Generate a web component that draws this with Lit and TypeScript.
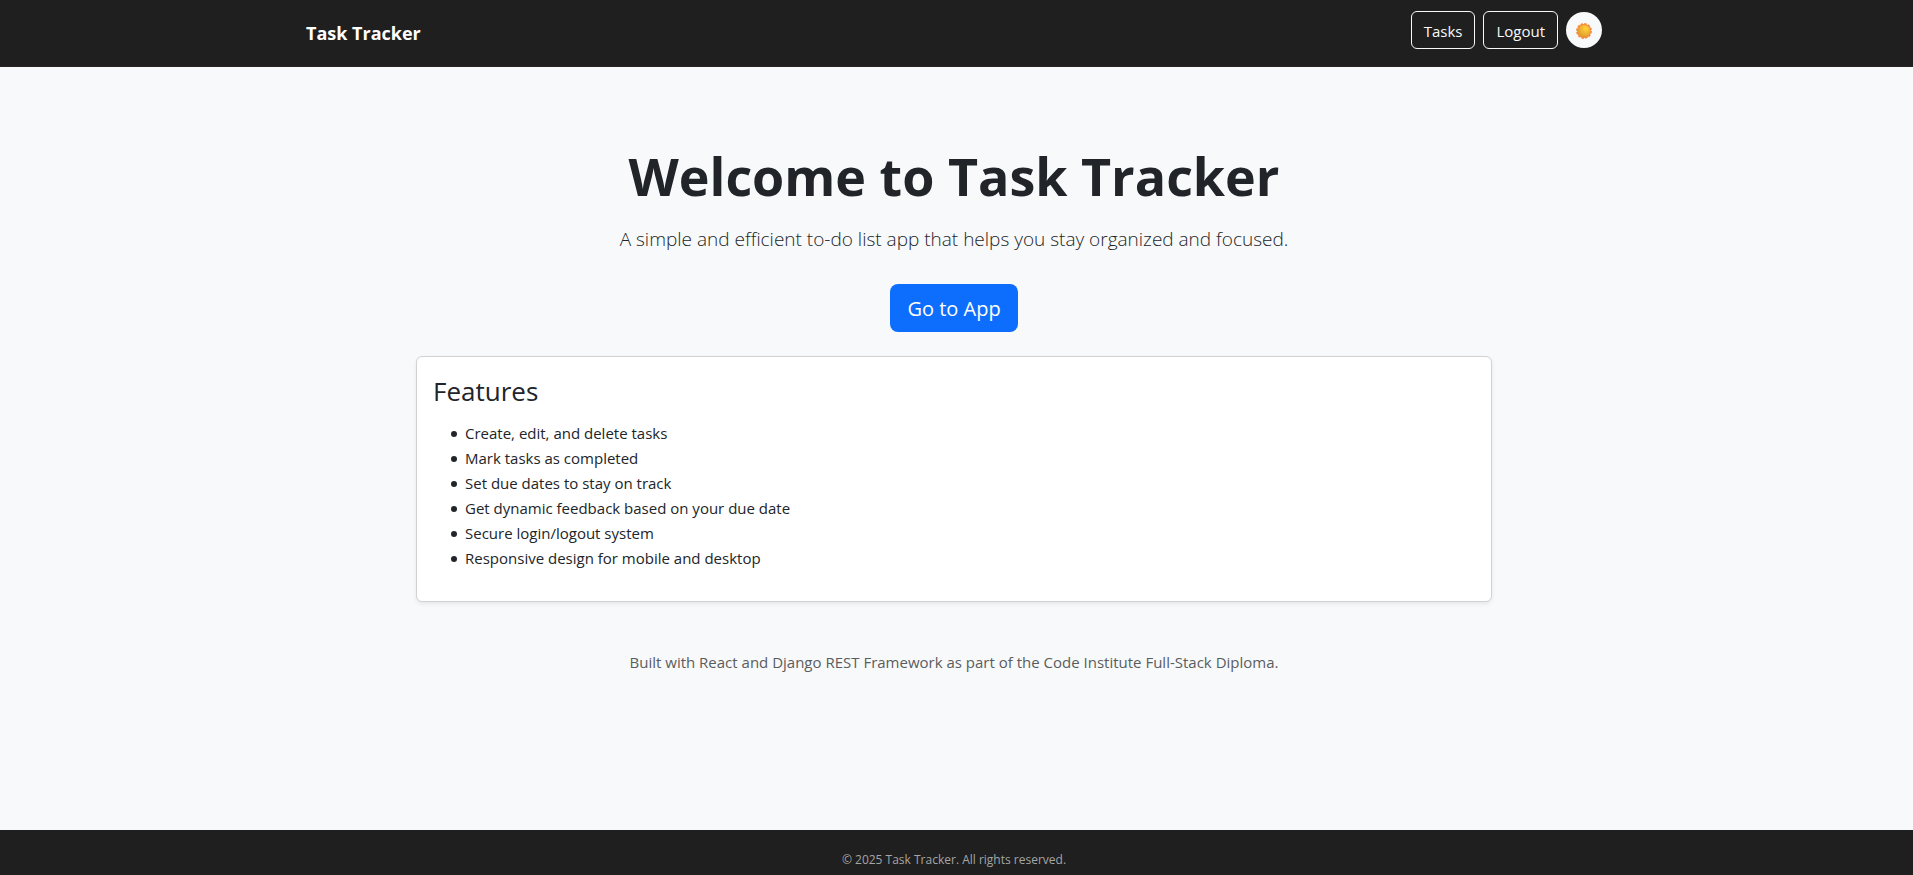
import { LitElement, html, css } from "lit";
import { customElement } from "lit/decorators.js";

const FEATURES = [
  "Create, edit, and delete tasks",
  "Mark tasks as completed",
  "Set due dates to stay on track",
  "Get dynamic feedback based on your due date",
  "Secure login/logout system",
  "Responsive design for mobile and desktop",
];

@customElement("app-root")
export class AppRoot extends LitElement {
  static styles = css`
    :host {
      display: flex;
      flex-direction: column;
      min-height: 100vh;
      box-sizing: border-box;
      background: #f8f9fa;
      color: #212529;
      font-family: "Segoe UI", "Open Sans", "Noto Sans", sans-serif;
      font-size: 15px;
      line-height: 24px;
    }
    * { box-sizing: border-box; }
    a { text-decoration: none; }
    .bar { background: #1f1f1f; border-bottom: 1px solid #2b2424; padding: 8px 5px 8px 0; }
    .container { width: 100%; max-width: 1320px; margin: 0 auto; padding: 0 12px; }
    .nav { display: flex; align-items: center; justify-content: space-between; min-height: 50px; }
    .brand { color: #fff; font-size: 18px; font-weight: 700; }
    .actions { display: flex; align-items: center; gap: 8px; padding-bottom: 6px; }
    .outline {
      height: 38px; padding: 0 12px; border: 1px solid #f8f9fa; border-radius: 6px;
      background: transparent; color: #f8f9fa; font: inherit; line-height: 38px;
    }
    .theme {
      display: grid; place-items: center; width: 36px; height: 36px; padding: 2px 0 0;
      border: 0; border-radius: 50%; background: #f8f9fa;
    }
    main { flex: 1; padding: 77px 5px 0 0; text-align: center; }
    h1 { margin: 0 0 16px; font-size: 52px; line-height: 64px; font-weight: 700; }
    .lead { margin: 0 0 30px; font-size: 19px; line-height: 30px; font-weight: 300; }
    .primary {
      display: inline-block; height: 48px; padding: 0 17px; border-radius: 8px;
      background: #0d6efd; color: #fff; font-size: 20px; line-height: 50px;
      vertical-align: top;
    }
    .card {
      max-width: 1076px; margin: 24px auto 48px; padding: 16px; text-align: left;
      background: #fff; border: 1px solid #d0d2d3; border-radius: 6px;
      box-shadow: 0 2px 4px rgba(0, 0, 0, 0.075);
    }
    h2 { margin: 0 0 12px; font-size: 26px; line-height: 36px; font-weight: 400; }
    ul { margin: 0 0 14px; padding-left: 32px; list-style: none; line-height: 25px; }
    li::before {
      content: ""; display: inline-block; width: 6px; height: 6px; border-radius: 50%;
      margin: 0 8px 0 -14px; vertical-align: 2px; background: #212529;
    }
    .note { margin: 0; color: #5a5d60; }
    footer { padding: 19px 5px 5px 0; background: #1f1f1f; color: #a5a5a5; text-align: center; font-size: 12px; line-height: 21px; }
  `;

  render() {
    return html`
      <header class="bar">
        <nav class="container nav">
          <a class="brand" href="#">Task Tracker</a>
          <div class="actions">
            <a class="outline" href="#tasks">Tasks</a>
            <button class="outline" type="button">Logout</button>
            <button class="theme" type="button" aria-label="Toggle theme">
              <svg width="16" height="16" viewBox="0 0 16 16" aria-hidden="true">
                <defs>
                  <radialGradient id="sun" cx="0.65" cy="0.3" r="0.8">
                    <stop offset="0" stop-color="#ffd43a" />
                    <stop offset="1" stop-color="#dd962c" />
                  </radialGradient>
                </defs>
                <circle cx="8" cy="8" r="6.9" fill="none" stroke="#f58a3c" stroke-width="2" stroke-dasharray="2.5 1.11" />
                <circle cx="8" cy="8" r="6.9" fill="#f68b3a" />
                <circle cx="8" cy="8" r="6.1" fill="url(#sun)" />
              </svg>
            </button>
          </div>
        </nav>
      </header>
      <main>
        <div class="container">
          <h1>Welcome to Task Tracker</h1>
          <p class="lead">A simple and efficient to-do list app that helps you stay organized and focused.</p>
          <a class="primary" href="#tasks">Go to App</a>
          <section class="card">
            <h2>Features</h2>
            <ul>${FEATURES.map((f) => html`<li>${f}</li>`)}</ul>
          </section>
          <p class="note">Built with React and Django REST Framework as part of the Code Institute Full-Stack Diploma.</p>
        </div>
      </main>
      <footer>© 2025 Task Tracker. All rights reserved.</footer>
    `;
  }
}
